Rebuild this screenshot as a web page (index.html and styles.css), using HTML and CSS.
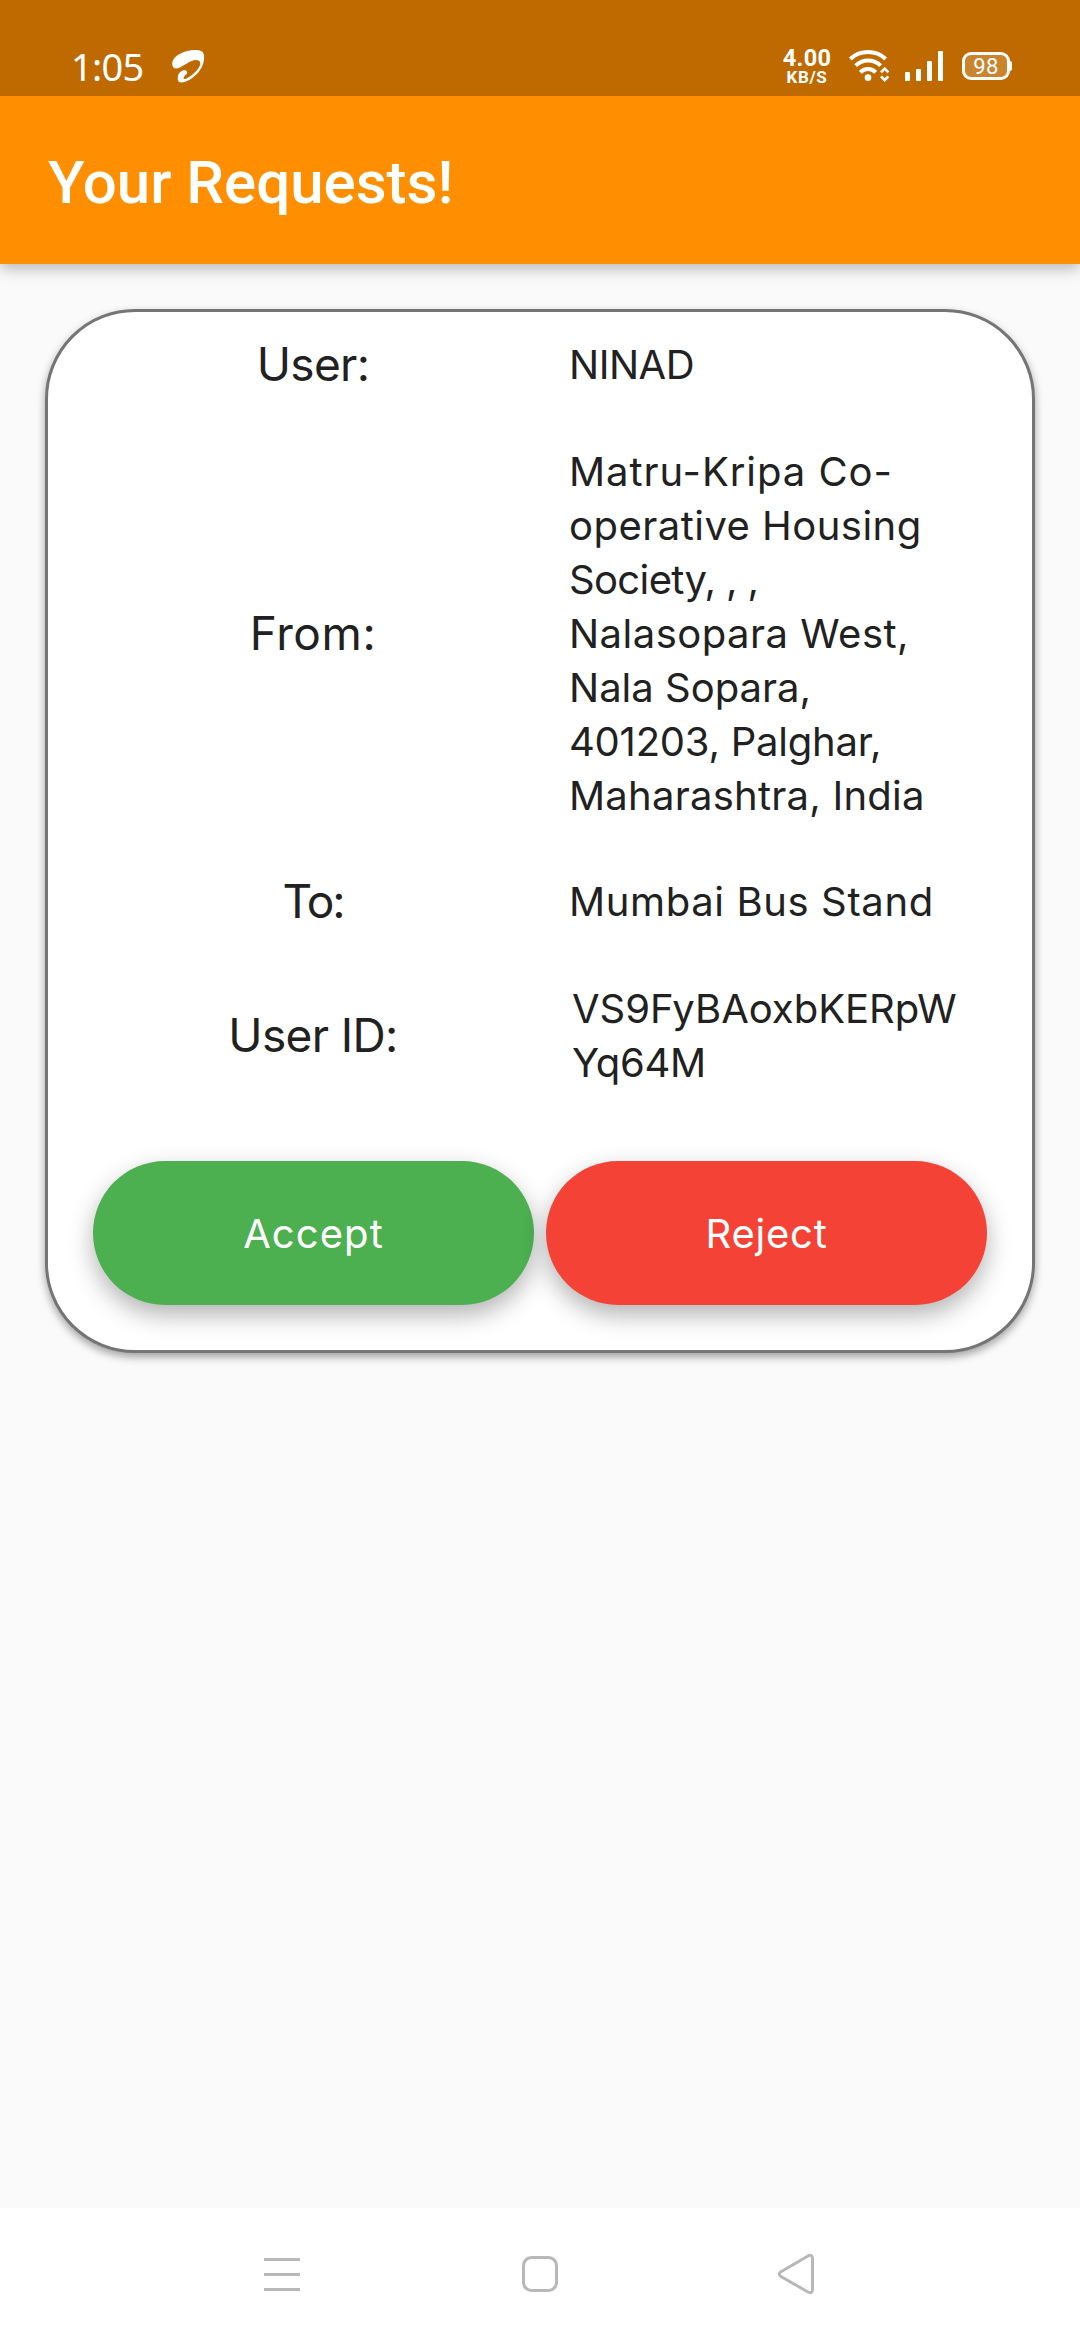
FILE: index.html
```
<!DOCTYPE html>
<html lang="en">
<head>
<meta charset="utf-8">
<title>Your Requests!</title>
<link rel="stylesheet" href="styles.css">
</head>
<body>
<div class="screen">
  <header class="status">
    <div class="status-left">
      <span class="clock">1:05</span>
      <svg class="carrier" viewBox="0 0 150 150" aria-hidden="true"><path d="M22 74C20 59 33 46 50 39C68 30 94 28 108 33C117 37 118 47 117 58C115 82 99 103 79 116C68 123 54 128 45 127C38 125 37 117 39 108C41 97 52 89 61 91C68 93 68 98 64 103C60 106 55 111 56 116C60 120 71 113 80 106C94 95 107 79 106 70C105 60 95 58 86 61C70 66 56 78 42 84C32 87 23 85 22 74Z"/></svg>
    </div>
    <div class="status-right">
      <div class="speed"><span class="speed-value">4.00</span><span class="speed-unit">KB/S</span></div>
      <svg class="signals" viewBox="840 40 110 50" aria-hidden="true">
        <g transform="translate(840 40) scale(.33333)" fill="none" stroke="#fff" stroke-width="12">
          <path d="M28 57A78 78 0 0 1 134 57M44 77A53 53 0 0 1 119 77M58 97A31 31 0 0 1 104 97"/>
          <path d="M120 97L131 86L142 97M120 109L131 120L142 109" stroke-width="8"/>
          <circle cx="81" cy="113" r="10" fill="#fff" stroke="none"/>
        </g>
        <g fill="#fff">
          <rect x="904" y="72" width="5" height="9" rx="1"/>
          <rect x="915" y="69" width="5" height="12" rx="1"/>
          <rect x="926" y="61" width="5" height="20" rx="1"/>
          <rect x="937" y="51" width="5" height="30" rx="1"/>
        </g>
      </svg>
      <div class="battery">98</div>
    </div>
  </header>

  <div class="appbar"><h1 class="title">Your Requests!</h1></div>

  <main class="content">
    <section class="card">
      <dl class="details">
        <dt class="label user">User:</dt>
        <dd class="value"><span class="line name">NINAD</span></dd>
        <dt class="label from">From:</dt>
        <dd class="value">
          <span class="line addr-1">Matru-Kripa Co-</span>
          <span class="line addr-2">operative Housing</span>
          <span class="line addr-3">Society, , ,</span>
          <span class="line addr-4">Nalasopara West,</span>
          <span class="line">Nala Sopara,</span>
          <span class="line addr-6">401203, Palghar,</span>
          <span class="line addr-7">Maharashtra, India</span>
        </dd>
        <dt class="label to">To:</dt>
        <dd class="value"><span class="line place">Mumbai Bus Stand</span></dd>
        <dt class="label user-id">User ID:</dt>
        <dd class="value id"><span class="line">VS9FyBAoxbKERpW</span><span class="line id-2">Yq64M</span></dd>
      </dl>
      <div class="actions">
        <button class="button accept">Accept</button>
        <button class="button reject">Reject</button>
      </div>
    </section>
  </main>

  <nav class="navbar">
    <svg class="nav-icon" viewBox="0 0 40 44"><path d="M2 7.5H38M2 22.5H38M2 37.5H38"/></svg>
    <svg class="nav-icon" viewBox="-2 0 40 44"><rect x="2.5" y="5.5" width="33" height="33" rx="8"/></svg>
    <svg class="nav-icon" viewBox="0 0 40 44"><path d="M31.5 4.2L5 19.8Q1.600 22 5 24.500L31.500 39.800Q36.500 42.500 36.500 37V7Q36.500 1.500 31.500 4.200Z"/></svg>
  </nav>
</div>
</body>
</html>
```
FILE: styles.css
```
* {
  box-sizing: border-box;
}

body {
  margin: 0;
  background: #fafafa;
  font-family: Inter, "Open Sans", sans-serif;
}

.screen {
  display: flex;
  flex-direction: column;
  width: 1080px;
  height: 2340px;
  overflow: hidden;
}

/* Status bar */
.status {
  position: relative;
  z-index: 1;
  display: flex;
  justify-content: space-between;
  height: 96px;
  padding: 40px 68px 0 71px;
  background: #bf6a00;
  color: #fff;
}

.status-left,
.status-right {
  display: flex;
  align-items: flex-start;
}

.clock {
  width: 94px;
  font: 400 38px/52px "Noto Sans", sans-serif;
  letter-spacing: -0.7px;
}

.carrier {
  width: 50px;
  height: 50px;
  fill: #fff;
}

.speed {
  display: flex;
  flex-direction: column;
  align-items: center;
  width: 50px;
  margin-right: 9px;
  padding-top: 6px;
  font-family: Roboto, sans-serif;
  font-weight: 700;
}

.speed-value {
  font-size: 23.5px;
  line-height: 24px;
  letter-spacing: 0.3px;
}

.speed-unit {
  font-size: 17px;
  line-height: 14px;
  letter-spacing: 0.6px;
}

.signals {
  width: 110px;
  height: 50px;
}

.battery {
  position: relative;
  width: 48px;
  height: 28px;
  margin: 12px 2px 0 11px;
  border: 3px solid #fff;
  border-radius: 9px;
  background: rgba(255, 255, 255, 0.18);
  font: 400 22px/23px Roboto, sans-serif;
  letter-spacing: 0.4px;
  text-align: center;
}

.battery::after {
  content: "";
  position: absolute;
  top: 6px;
  right: -5px;
  width: 3px;
  height: 10px;
  border-radius: 0 2px 2px 0;
  background: #fff;
}

/* App bar */
.appbar {
  position: relative;
  display: flex;
  align-items: center;
  height: 168px;
  padding: 6px 48px 0;
  background: #ff8f00;
  box-shadow: 0 5px 14px rgba(0, 0, 0, 0.26);
}

.title {
  margin: 0;
  color: #fff;
  font: 500 60px/72px Roboto, sans-serif;
}

/* Request card */
.content {
  flex: 1;
  padding: 45px;
}

.card {
  height: 1044px;
  padding: 26.4px 45px 45px;
  border: 3px solid #757575;
  border-radius: 90px;
  background: #fff;
  box-shadow: 0 4px 9px rgba(0, 0, 0, 0.36);
  display: flex;
  flex-direction: column;
  justify-content: space-between;
}

.details {
  display: grid;
  grid-template-columns: 416px 1fr;
  column-gap: 48px;
  row-gap: 52.5px;
  align-items: center;
  margin: 0 -40px 0 12px;
  color: #212121;
}

.label {
  height: 54px;
  font-size: 46px;
  line-height: 53px;
  text-align: center;
}

.value {
  margin: 0;
  font-size: 40px;
  line-height: 54px;
}

.line {
  display: block;
  white-space: nowrap;
}

.user { letter-spacing: -0.66px; }
.from { letter-spacing: 0.62px; }
.to { letter-spacing: -2px; }
.user-id { letter-spacing: -0.62px; }
.name { letter-spacing: -0.48px; }
.addr-1 { letter-spacing: 0.95px; }
.addr-2 { letter-spacing: 0.47px; }
.addr-3 { letter-spacing: -0.64px; }
.addr-4 { letter-spacing: 0.48px; }
.addr-6 { letter-spacing: -0.23px; }
.addr-7 { letter-spacing: 0.24px; }
.place { letter-spacing: 0.62px; }
.id { padding-left: 3px; }
.id-2 { letter-spacing: -0.3px; }

.actions {
  display: grid;
  grid-template-columns: 1fr 1fr;
  gap: 12px;
}

.button {
  height: 144px;
  padding: 2px 0 0;
  border: 0;
  border-radius: 72px;
  color: #fff;
  font: 400 40px/54px Inter, sans-serif;
  box-shadow: 0 10px 24px rgba(0, 0, 0, 0.3);
}

.accept {
  background: #4caf50;
  letter-spacing: 1.08px;
}

.reject {
  background: #f44336;
  letter-spacing: 0.77px;
}

/* System navigation */
.navbar {
  display: flex;
  align-items: center;
  justify-content: space-between;
  height: 132px;
  padding: 0 264px 0 262px;
  background: #fff;
}

.nav-icon {
  width: 40px;
  height: 44px;
  fill: none;
  stroke: #b8b8b8;
  stroke-width: 3;
}
```
